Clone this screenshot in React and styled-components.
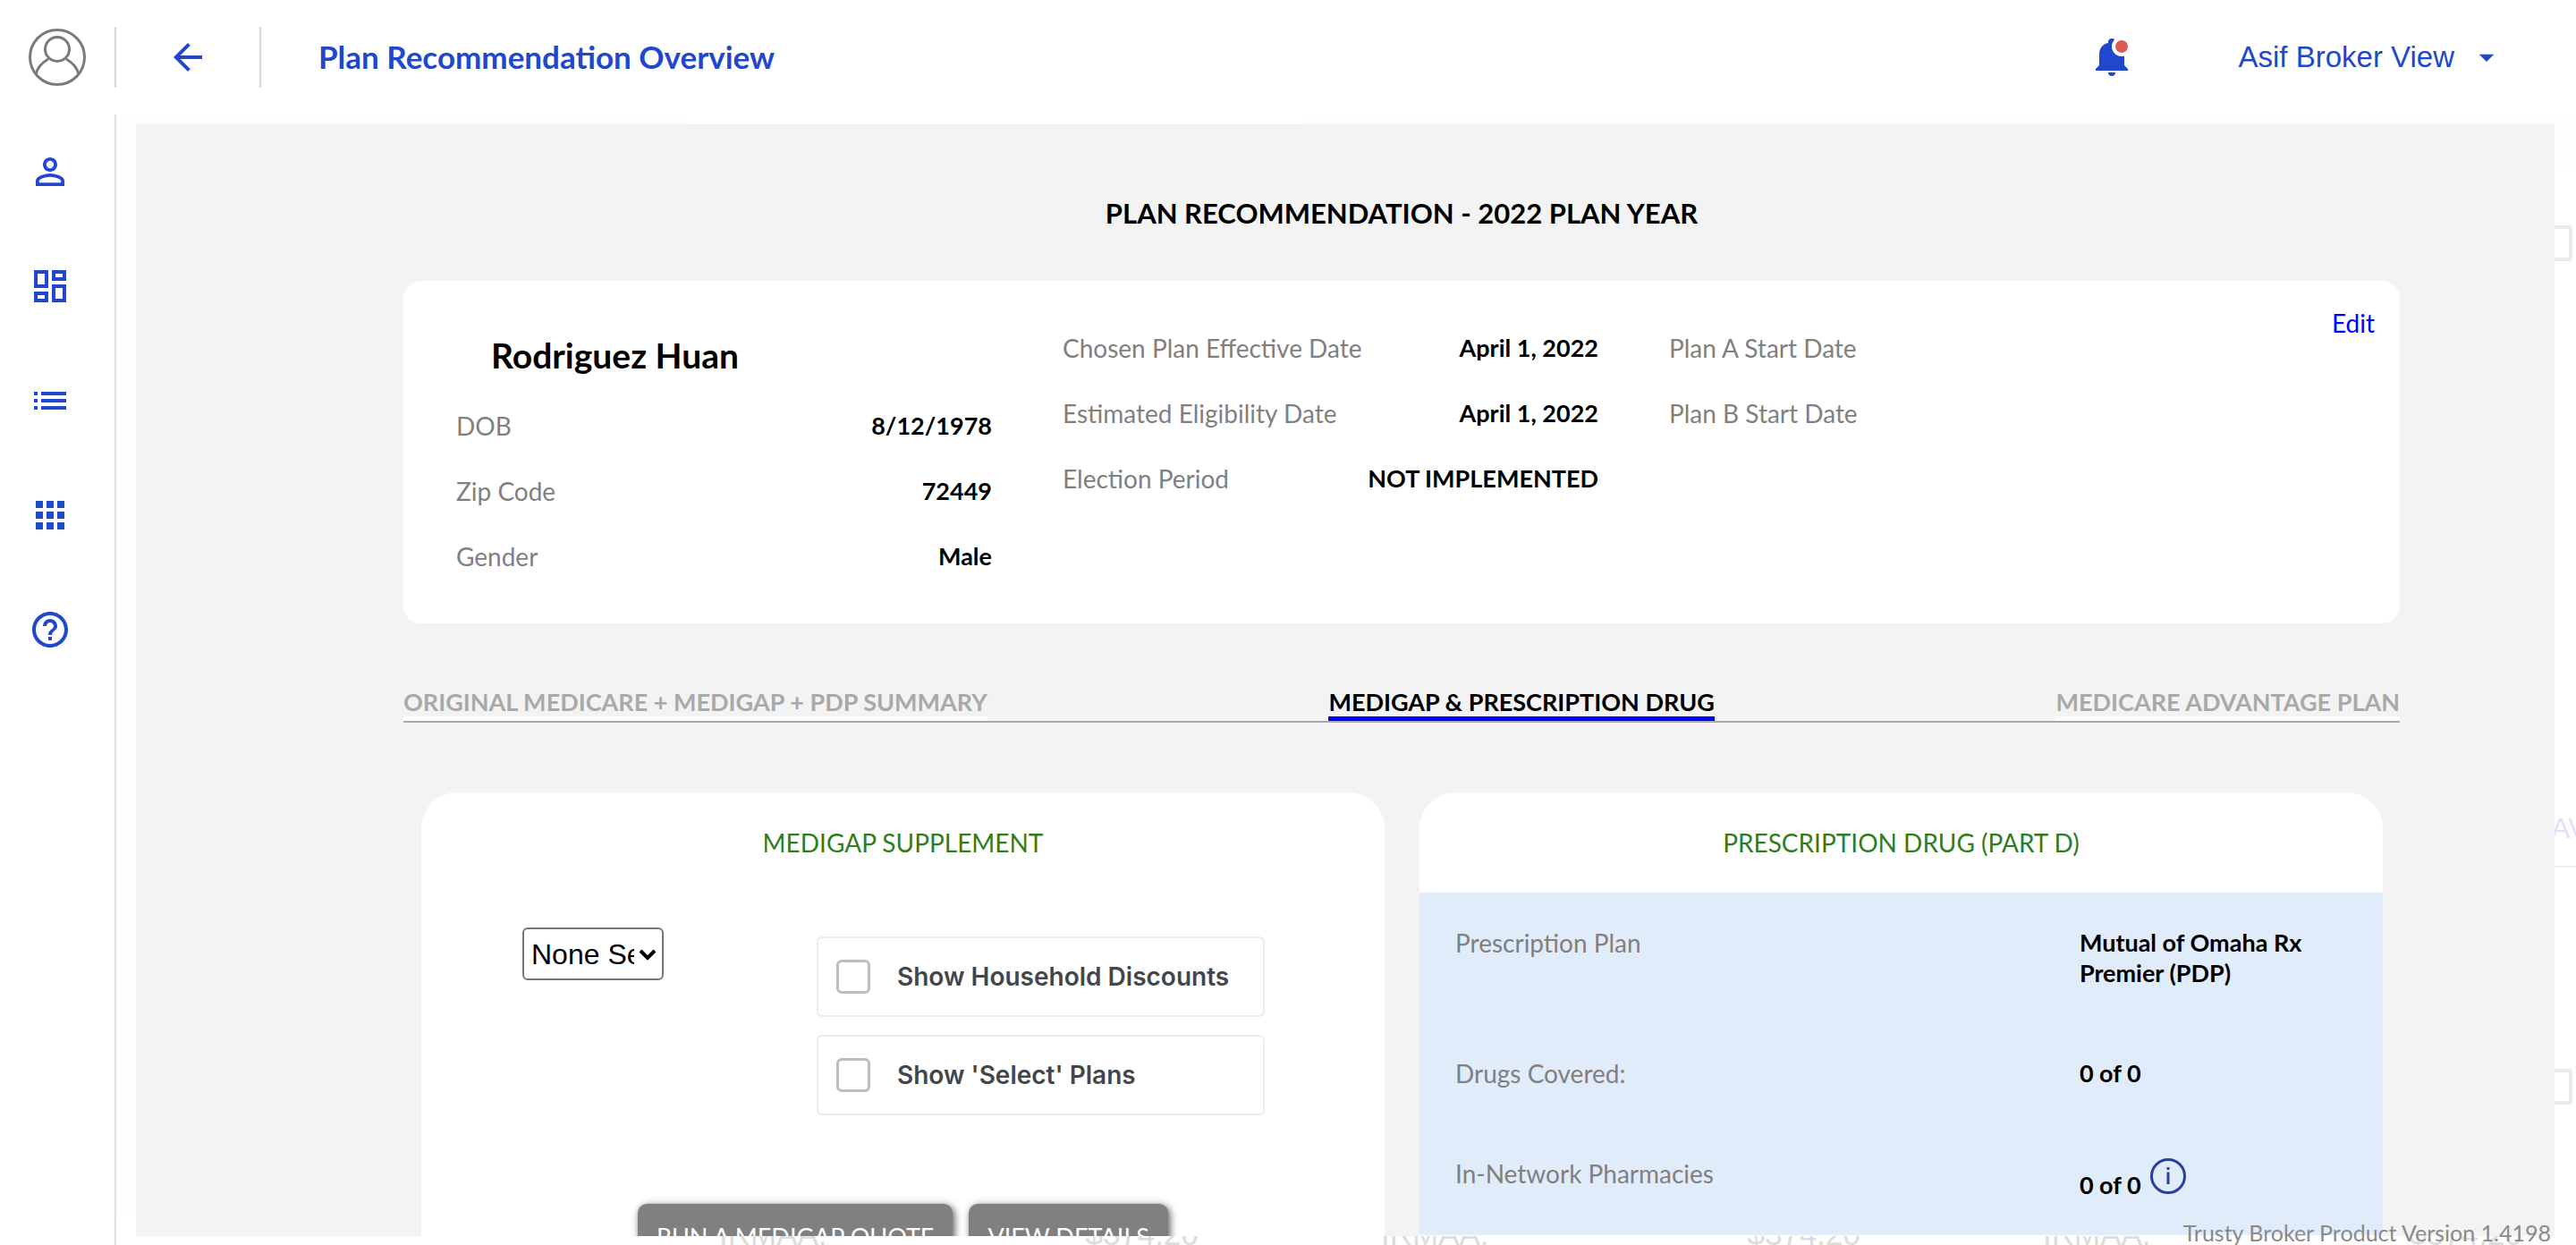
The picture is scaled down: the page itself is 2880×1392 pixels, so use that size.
import React from "react";
import styled, { createGlobalStyle } from "styled-components";
import { MdArrowBack, MdPersonOutline, MdOutlineDashboard, MdList, MdApps, MdHelpOutline, MdArrowDropDown } from "react-icons/md";

const Global = createGlobalStyle`
  * { box-sizing: border-box; }
  html, body { margin: 0; height: 100%; overflow: hidden; background: #fff; }
  #root { height: 100%; }
  body { font-family: Lato, "Liberation Sans", sans-serif; font-size: 28px; line-height: 34px; color: #000; }
  h1, h2, h3, p, dl, dd, dt { margin: 0; }
  button { font: inherit; border: 0; padding: 0; background: none; cursor: pointer; }
`;

const Shell = styled.div`
  display: flex;
  flex-direction: column;
  height: 100vh;
`;

const Header = styled.header`
  display: flex;
  align-items: center;
  flex: none;
  height: 128px;
  padding-right: 80px;
  color: #2047cc;
`;

const Avatar = styled.button`
  display: flex;
  justify-content: center;
  width: 128px;
`;

const Divider = styled.span`
  width: 2px;
  height: 68px;
  background: #d8d8d8;
`;

const BackButton = styled.button`
  display: flex;
  justify-content: center;
  width: 160px;
  color: inherit;
`;

const PageTitle = styled.h1`
  flex: 1;
  padding: 0 0 2px 64px;
  font-size: 35px;
  line-height: 44px;
  font-weight: 700;
`;

const BellButton = styled.button`
  display: flex;
  margin-right: 122px;
`;

const AccountButton = styled.button`
  display: flex;
  align-items: center;
  gap: 16px;
  color: inherit;
  font-family: "Liberation Sans", sans-serif;
  font-size: 33px;
  line-height: 40px;
`;

const Body = styled.div`
  display: flex;
  flex: 1;
  min-height: 0;
`;

const Sidebar = styled.nav`
  display: flex;
  flex-direction: column;
  flex: none;
  gap: 80px;
  width: 130px;
  padding: 40px 0 0 32px;
  border-right: 2px solid #dfdfdf;
`;

const NavLink = styled.a`
  display: flex;
  color: #2047cc;
`;

const Stage = styled.main`
  position: relative;
  display: flex;
  flex: 1;
  min-width: 0;
  padding: 11px 24px 10px 22px;
  background: #fdfdfd;
  overflow: hidden;
`;

const Faded = styled.div`
  position: absolute;
  color: #dcdcdc;
  font-family: "Liberation Sans", sans-serif;
  font-size: 35px;
  line-height: 40px;
`;

const FadedCard = styled(Faded)`
  top: 0;
  left: 638px;
  width: 688px;
  height: 200px;
  background: #fff;
`;

const FadedStrip = styled(Faded)`
  top: 64px;
  right: 0;
  bottom: 0;
  width: 24px;
  background: #fff;
`;

const FadedBox = styled(Faded)`
  top: ${(p) => p.$top}px;
  right: 4px;
  width: 40px;
  height: 40px;
  border: 4px solid #ebebeb;
  border-radius: 4px;
`;

const FadedLink = styled(Faded)`
  top: 778px;
  right: 0;
  width: 28px;
  overflow: hidden;
  padding-bottom: 22px;
  border-bottom: 2px solid #f0f0f0;
  color: #dfe2fa;
  font-size: 32px;
`;

const FadedFooter = styled(Faded)`
  left: 0;
  right: 0;
  bottom: -8px;
  display: grid;
  grid-template-columns: repeat(3, 1fr);
  column-gap: 204px;
  padding: 0 60px 0 674px;
  background: #fff;
`;

const FadedPair = styled.div`
  display: flex;
  justify-content: space-between;
`;

const Panel = styled.section`
  position: relative;
  flex: 1;
  min-width: 0;
  padding: 79px 173px 0 299px;
  background: #f3f3f3;
  overflow: hidden;
`;

const Heading = styled.h2`
  font-size: 31px;
  line-height: 40px;
  font-weight: 700;
  text-align: center;
`;

const Profile = styled.section`
  display: grid;
  grid-template-columns: repeat(3, minmax(0, 1fr)) 111px;
  column-gap: 79px;
  margin-top: 56px;
  padding: 30px 28px 39px 59px;
  border-radius: 20px;
  background: #fff;
`;

const ProfileName = styled.h3`
  padding: 29px 39px 18px;
  font-size: 39px;
  line-height: 48px;
  font-weight: 700;
`;

const Facts = styled.dl`
  padding-top: ${(p) => (p.$raised ? 8 : 0)}px;
`;

const Fact = styled.div`
  display: flex;
  justify-content: space-between;
  padding: 20px 0 19px;
`;

const Term = styled.dt`
  color: #808080;
`;

const Value = styled.dd`
  font-size: 27px;
  font-weight: 700;
`;

const EditLink = styled.a`
  justify-self: end;
  align-self: start;
  color: #0000ff;
  text-decoration: none;
`;

const Tabs = styled.div`
  display: flex;
  justify-content: space-between;
  margin-top: 66px;
  border-bottom: 2px solid #a9a9a9;
`;

const Tab = styled.button`
  padding-top: 6px;
  border-bottom: 5px solid ${(p) => (p.$active ? "#0000ff" : "#fff")};
  color: ${(p) => (p.$active ? "#000" : "#a9a9a9")};
  font-size: 27px;
  line-height: 32px;
  font-weight: 700;
`;

const Plans = styled.div`
  display: grid;
  grid-template-columns: repeat(2, minmax(0, 1fr));
  column-gap: 39px;
  margin-top: 78px;
  padding: 0 19px 0 20px;
`;

const Plan = styled.section`
  min-height: 640px;
  border-radius: 40px 40px 0 0;
  background: #fff;
`;

const PlanTitle = styled.h3`
  padding: 39px 0;
  color: #2f7d1c;
  font-size: 28px;
  font-weight: 400;
  text-align: center;
`;

const Options = styled.div`
  display: flex;
  align-items: flex-start;
  gap: 171px;
  padding: 39px 113px 0;
`;

const SelectWrap = styled.div`
  position: relative;
  display: flex;
  width: 158px;

  svg {
    position: absolute;
    top: 24px;
    right: 8px;
    pointer-events: none;
  }
`;

const PlanSelect = styled.select`
  appearance: none;
  width: 100%;
  height: 59px;
  padding: 0 31px 0 8px;
  border: 2px solid #767676;
  border-radius: 6px;
  background: #fff;
  color: #000;
  font-family: "Liberation Sans", sans-serif;
  font-size: 32px;
`;

const Checks = styled.div`
  display: flex;
  flex-direction: column;
  gap: 20px;
  width: 501px;
  padding-top: 10px;
`;

const CheckCard = styled.label`
  display: flex;
  align-items: center;
  gap: 30px;
  height: 90px;
  padding: 0 20px;
  border: 2px solid #ececec;
  border-radius: 6px;
  color: #43464d;
  font-family: Inter, sans-serif;
  font-size: 28px;
  font-weight: 600;
`;

const Check = styled.input`
  appearance: none;
  width: 38px;
  height: 38px;
  margin: 0;
  border: 3px solid #bdbdbd;
  border-radius: 6px;
  background: #fff;
`;

const Actions = styled.div`
  display: flex;
  justify-content: center;
  gap: 18px;
  padding-top: 99px;
`;

const ActionButton = styled.button`
  height: 74px;
  padding: 0 21px;
  border-radius: 10px;
  background: #808080;
  box-shadow: 2px 2px 8px #555;
  color: #fff;
  font-size: 27px;
`;

const Drug = styled.dl`
  background: #e0ecfa;
`;

const DrugRow = styled.div`
  display: grid;
  grid-template-columns: 7fr 3fr;
  padding: 39px 40px 37px;
  border-bottom: 2px solid #e3eefb;
`;

const DrugValue = styled(Value)`
  display: flex;
  align-items: baseline;
  gap: 10px;
`;

const InfoButton = styled.button`
  display: flex;
`;

const Version = styled.small`
  position: absolute;
  right: 28px;
  bottom: 0;
  color: #8a8a8a;
  font-size: 25px;
  line-height: 28px;
`;

const AvatarIcon = () => (
  <svg width="64" height="64" viewBox="0 0 64 64" fill="none" stroke="#7a7a7a" strokeWidth="3">
    <circle cx="32" cy="32" r="30.5" />
    <circle cx="32" cy="23" r="13.5" />
    <path d="M8 51c2-8 7-13 14-17M56 51c-2-8-7-13-14-17" />
  </svg>
);

const BellIcon = () => (
  <svg width="38" height="42" viewBox="0 0 38 42">
    <path d="M18 0c2.200 0 4 1.500 4 3.500V5c6 2 10 7 10 14v11l4 4v2H0v-2l4-4V18C4 11 8 6 14 5V3.500C14 1.500 15.800 0 18 0zM14 38h8a4 4 0 0 1-8 0z" fill="#2047cc" />
    <circle cx="29" cy="9" r="11" fill="#fff" />
    <circle cx="29" cy="9" r="7" fill="#dd5b56" />
  </svg>
);

const ChevronIcon = () => (
  <svg width="20" height="13" viewBox="0 0 20 13" fill="none" stroke="#000" strokeWidth="4">
    <path d="M2 2l8 8 8-8" />
  </svg>
);

const InfoIcon = () => (
  <svg width="40" height="40" viewBox="0 0 40 40" fill="none" stroke="#2b3f9e">
    <circle cx="20" cy="20" r="18.5" strokeWidth="3" />
    <path d="M20 15.500V29M20 10v3" strokeWidth="3" />
  </svg>
);

const nav = [
  ["Clients", MdPersonOutline],
  ["Dashboard", MdOutlineDashboard],
  ["List", MdList],
  ["Apps", MdApps],
  ["Help", MdHelpOutline],
];

const tabs = ["ORIGINAL MEDICARE + MEDIGAP + PDP SUMMARY", "MEDIGAP & PRESCRIPTION DRUG", "MEDICARE ADVANTAGE PLAN"];

function FactList({ items, raised }) {
  return (
    <Facts $raised={raised}>
      {items.map(([term, value]) => (
        <Fact key={term}>
          <Term>{term}</Term>
          <Value>{value}</Value>
        </Fact>
      ))}
    </Facts>
  );
}

export default function App() {
  return (
    <Shell>
      <Global />
      <Header>
        <Avatar aria-label="Profile"><AvatarIcon /></Avatar>
        <Divider />
        <BackButton aria-label="Back"><MdArrowBack size={48} /></BackButton>
        <Divider />
        <PageTitle>Plan Recommendation Overview</PageTitle>
        <BellButton aria-label="Notifications"><BellIcon /></BellButton>
        <AccountButton>Asif Broker View<MdArrowDropDown size={40} /></AccountButton>
      </Header>
      <Body>
        <Sidebar>
          {nav.map(([label, Icon]) => (
            <NavLink key={label} href="#" aria-label={label}><Icon size={48} /></NavLink>
          ))}
        </Sidebar>
        <Stage>
          <FadedCard />
          <FadedStrip />
          <FadedBox $top={124} />
          <FadedLink>AV</FadedLink>
          <FadedBox $top={1067} />
          <FadedFooter>
            {[0, 1, 2].map((i) => (
              <FadedPair key={i}><span>IRMAA:</span><span>$374.20</span></FadedPair>
            ))}
          </FadedFooter>
          <Panel>
            <Heading>PLAN RECOMMENDATION - 2022 PLAN YEAR</Heading>
            <Profile>
              <div>
                <ProfileName>Rodriguez Huan</ProfileName>
                <FactList items={[["DOB", "8/12/1978"], ["Zip Code", "72449"], ["Gender", "Male"]]} />
              </div>
              <FactList raised items={[["Chosen Plan Effective Date", "April 1, 2022"], ["Estimated Eligibility Date", "April 1, 2022"], ["Election Period", "NOT IMPLEMENTED"]]} />
              <FactList raised items={[["Plan A Start Date", ""], ["Plan B Start Date", ""]]} />
              <EditLink href="#">Edit</EditLink>
            </Profile>
            <Tabs role="tablist">
              {tabs.map((t, i) => (
                <Tab key={t} role="tab" aria-selected={i === 1} $active={i === 1}>{t}</Tab>
              ))}
            </Tabs>
            <Plans>
              <Plan>
                <PlanTitle>MEDIGAP SUPPLEMENT</PlanTitle>
                <Options>
                  <SelectWrap>
                    <PlanSelect aria-label="Medigap plan"><option>None Selected</option></PlanSelect>
                    <ChevronIcon />
                  </SelectWrap>
                  <Checks>
                    <CheckCard><Check type="checkbox" />Show Household Discounts</CheckCard>
                    <CheckCard><Check type="checkbox" />Show 'Select' Plans</CheckCard>
                  </Checks>
                </Options>
                <Actions>
                  <ActionButton>RUN A MEDIGAP QUOTE</ActionButton>
                  <ActionButton>VIEW DETAILS</ActionButton>
                </Actions>
              </Plan>
              <Plan>
                <PlanTitle>PRESCRIPTION DRUG (PART D)</PlanTitle>
                <Drug>
                  <DrugRow><Term>Prescription Plan</Term><Value>Mutual of Omaha Rx Premier (PDP)</Value></DrugRow>
                  <DrugRow><Term>Drugs Covered:</Term><Value>0 of 0</Value></DrugRow>
                  <DrugRow><Term>In-Network Pharmacies</Term><DrugValue>0 of 0<InfoButton aria-label="Pharmacy details"><InfoIcon /></InfoButton></DrugValue></DrugRow>
                </Drug>
              </Plan>
            </Plans>
          </Panel>
          <Version>Trusty Broker Product Version 1.4198</Version>
        </Stage>
      </Body>
    </Shell>
  );
}
